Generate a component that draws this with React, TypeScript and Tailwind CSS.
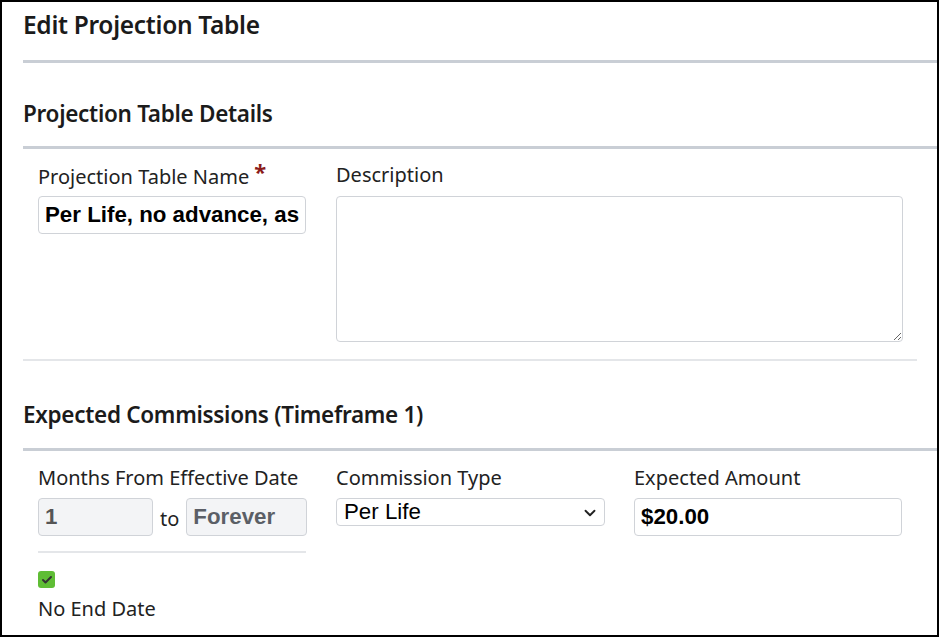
import { ChevronDown, Check } from 'lucide-react'

const labelFont = { fontFamily: '"Noto Sans", "Open Sans", sans-serif' }

const Heading = ({ children, size }: { children: string; size: string }) => (
  <h2 className={`${size} font-semibold text-[#1b1b1b] tracking-[-0.3px]`} style={labelFont}>
    {children}
  </h2>
)

const Label = ({ children, required }: { children: string; required?: boolean }) => (
  <label className="block text-[20px] leading-[24px] text-[#222] h-[24px]" style={labelFont}>
    {children}
    {required && <span className="text-[#8b1a1a] font-bold text-[22px] ml-[5px] relative -top-[4px]">*</span>}
  </label>
)

const inputBase =
  "block h-[38px] border border-[#d0d3d8] rounded-[4px] px-[6px] text-[22.3px] font-bold outline-none font-['Liberation_Sans',Arial,sans-serif]"

export default function App() {
  return (
    <div className="w-[939px] h-[637px] border-2 border-black bg-white overflow-hidden pl-[21px]">
      <div className="pt-[8px] h-[58px]">
        <Heading size="text-[24.5px] leading-[30px]">Edit Projection Table</Heading>
      </div>
      <div className="border-t-[3px] border-[#c9ced5]" />

      <div className="pt-[37px] h-[83px]">
        <Heading size="text-[22.5px] leading-[28px]">Projection Table Details</Heading>
      </div>
      <div className="border-t-[3px] border-[#c9ced5]" />

      <div className="pr-[20px]">
        <div className="grid grid-cols-[268px_268px_268px] gap-x-[30px] pl-[15px] pt-[14px]">
          <div>
            <Label required>Projection Table Name</Label>
            <input
              className={`${inputBase} w-[268px] mt-[9px] text-black bg-white`}
              defaultValue="Per Life, no advance, as earned"
            />
          </div>
          <div className="col-span-2">
            <Label>Description</Label>
            <textarea className="block w-[567px] h-[146px] mt-[9px] border border-[#d0d3d8] rounded-[4px] outline-none" />
          </div>
        </div>
        <div className="border-t-2 border-[#e4e6e9] mt-[17px]" />
      </div>

      <div className="pt-[40px] h-[87px]">
        <Heading size="text-[22.5px] leading-[28px]">Expected Commissions (Timeframe 1)</Heading>
      </div>
      <div className="border-t-[3px] border-[#c9ced5]" />

      <div className="grid grid-cols-[268px_268px_268px] gap-x-[30px] pl-[15px] pt-[15px]">
        <div>
          <Label>Months From Effective Date</Label>
          <div className="flex items-center mt-[8px]">
            <input
              disabled
              className={`${inputBase} w-[115px] bg-[#f3f4f6] text-[#555]`}
              defaultValue="1"
            />
            <span className="text-[20px] text-[#222] px-[7px] mt-[3px]" style={labelFont}>to</span>
            <input
              disabled
              className={`${inputBase} w-[121px] bg-[#f3f4f6] text-[#5b5f66]`}
              defaultValue="Forever"
            />
          </div>
          <div className="border-t-2 border-[#e4e6e9] mt-[15px]" />
          <div className="mt-[18px] w-[17px] h-[17px] rounded-[3px] bg-[#5fbd35] flex items-center justify-center">
            <Check size={12} strokeWidth={4} className="text-[#333]" />
          </div>
          <div className="mt-[9px] text-[20px] leading-[24px] text-[#222]" style={labelFont}>
            No End Date
          </div>
        </div>
        <div>
          <Label>Commission Type</Label>
          <div className="relative mt-[8px] w-[269px] h-[28px] border border-[#d0d3d8] rounded-[4px] flex items-center pl-[7px] font-['Liberation_Sans',Arial,sans-serif] text-[22.3px] text-black">
            Per Life
            <ChevronDown size={18} strokeWidth={2.5} className="absolute right-[5px] top-[5px] text-[#222]" />
          </div>
        </div>
        <div>
          <Label>Expected Amount</Label>
          <input className={`${inputBase} w-[268px] mt-[8px] text-black bg-white`} defaultValue="$20.00" />
        </div>
      </div>
    </div>
  )
}
